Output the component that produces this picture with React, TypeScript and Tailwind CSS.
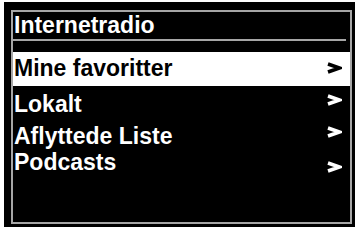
const items = [
  { label: 'Mine favoritter', selected: true, h: 'h-[34px]', textTop: 'mt-[3px]', chevTop: 'mt-[10px]' },
  { label: 'Lokalt', selected: false, h: 'h-[37px]', textTop: 'mt-[5px]', chevTop: 'mt-[8px]' },
  { label: 'Aflyttede Liste', selected: false, h: 'h-[26px]', textTop: 'mt-0', chevTop: 'mt-[3px]' },
  { label: 'Podcasts', selected: false, h: 'h-[26px]', textTop: 'mt-0', chevTop: 'mt-[12px]' },
];

function Chevron({ dark }: { dark: boolean }) {
  return (
    <svg width="16" height="12" viewBox="0 0 16 12" className="block">
      <polyline
        points="2,2 13.5,6 2,10"
        fill="none"
        stroke={dark ? '#000' : '#fff'}
        strokeWidth="3.6"
        strokeLinejoin="miter"
        strokeLinecap="butt"
      />
    </svg>
  );
}

export default function App() {
  return (
    <div className="h-[231px] w-[359px] bg-white pl-[4px] pt-[2px] font-['Liberation_Sans',Arial,sans-serif] font-bold">
      <div className="h-[225px] w-[351px] bg-black pl-[7px] pr-[3px] pt-[8px] pb-[3px]">
        <div className="flex h-[214px] w-[341px] flex-col border-2 border-[#a6a6a6]">
          <div className="h-[26px] pl-[1px] text-[23px] leading-[26px] text-white">Internetradio</div>
          <div className="mt-[1px] mr-[4px] h-[2px] bg-[#a6a6a6]" />
          <div className="h-[11px]" />
          {items.map((i) => (
            <div
              key={i.label}
              className={`flex items-start justify-between pl-[1px] pr-[8px] ${i.h} ${
                i.selected ? 'bg-white text-black' : 'text-white'
              }`}
            >
              <span className={`text-[23px] leading-[26px] whitespace-nowrap ${i.textTop}`}>{i.label}</span>
              <span className={i.chevTop}>
                <Chevron dark={i.selected} />
              </span>
            </div>
          ))}
        </div>
      </div>
    </div>
  );
}
